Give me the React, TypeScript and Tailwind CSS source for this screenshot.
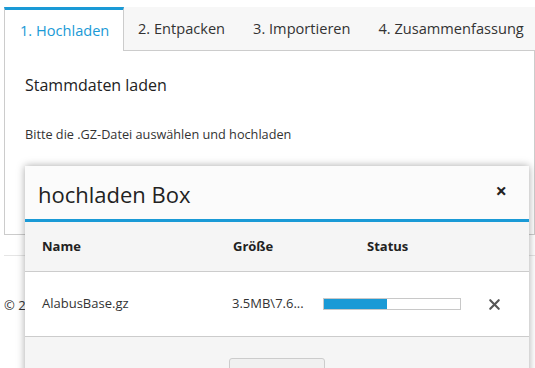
import { X } from "lucide-react";

const tabs = ["1. Hochladen", "2. Entpacken", "3. Importieren", "4. Zusammenfassung"];

function UploadBox() {
  return (
    <div className="absolute left-[25px] top-[166px] w-[504px] bg-white shadow-[0_0_8px_rgba(0,0,0,0.35)]">
      <div className="flex h-[56px] items-center justify-between border-b-[3px] border-[#1a9ad6] bg-[#fbfbfb] pl-[13px] pr-[22px]">
        <span className="pt-[4px] text-[22px] text-[#222]">hochladen Box</span>
        <span className="pb-[4px] text-[20px] font-bold leading-none text-[#222]">×</span>
      </div>
      <div className="flex h-[50px] items-center border-b border-[#ccc] bg-[#f5f5f5] text-[13px] font-bold text-[#222]">
        <span className="w-[208px] pl-[17px]">Name</span>
        <span className="w-[134px]">Größe</span>
        <span>Status</span>
      </div>
      <div className="flex h-[65px] items-center border-b border-[#ccc] bg-white text-[13px] text-[#333]">
        <span className="w-[207px] pl-[17px]">AlabusBase.gz</span>
        <span className="w-[91px]">3.5MB\7.6...</span>
        <div className="h-[12px] w-[138px] border border-[#c8c8c8] bg-white">
          <div className="h-full w-[46%] bg-[#1a9ad6]" />
        </div>
        <X className="ml-[25px] h-[17px] w-[17px] text-[#555]" strokeWidth={3} />
      </div>
      <div className="flex h-[60px] justify-center bg-[#f5f5f5] pt-[21px]">
        <button className="h-[34px] w-[96px] rounded-[3px] border border-[#ccc] bg-[#f0f0f0] pt-[6px] text-[13px] text-[#333]">
          Hochladen
        </button>
      </div>
    </div>
  );
}

export default function App() {
  return (
    <div className="relative h-[368px] w-[535px] overflow-hidden bg-white font-['Open_Sans',sans-serif] text-[#333]">
      <div className="pl-[4px] pt-[7px]">
        <div className="flex h-[44px] border-b border-[#ccc] bg-[#f7f7f7] whitespace-nowrap text-[14.6px]">
          {tabs.map((t, i) =>
            i === 0 ? (
              <div
                key={t}
                className="relative -mb-px flex h-[44px] w-[120px] shrink-0 items-center border-x border-[#ccc] border-t-[3px] border-t-[#1a9ad6] bg-white pl-[15px] text-[#1a9ad6]"
              >
                {t}
              </div>
            ) : (
              <div key={t} className="flex shrink-0 items-center px-[14px] text-[#333]">
                {t}
              </div>
            )
          )}
        </div>
        <div className="h-[184px] border-x border-b border-[#ccc] px-[20px] pt-[22px]">
          <div className="text-[16px] text-[#222]">Stammdaten laden</div>
          <div className="mt-[28px] text-[12.7px] text-[#333]">Bitte die .GZ-Datei auswählen und hochladen</div>
        </div>
        <div className="mt-[20px] border-t border-[#e5e5e5] pt-[40px] text-[13px]">© 2024</div>
      </div>
      <UploadBox />
    </div>
  );
}
